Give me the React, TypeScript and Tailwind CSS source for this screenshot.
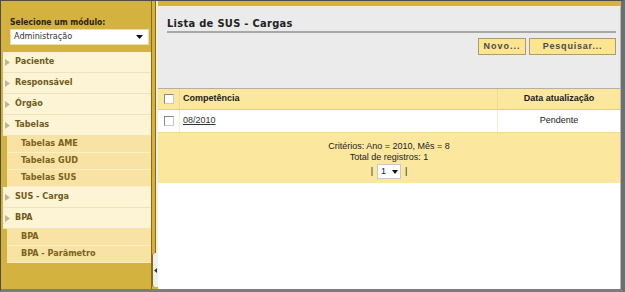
import React from "react";

const menuFont = { fontFamily: '"DejaVu Sans Condensed", "Liberation Sans", Arial, sans-serif' };
const tableFont = { fontFamily: '"Liberation Sans", Arial, sans-serif' };

type Item = { label: string; children?: string[] };

const menu: Item[] = [
  { label: "Paciente" },
  { label: "Responsável" },
  { label: "Órgão" },
  { label: "Tabelas", children: ["Tabelas AME", "Tabelas GUD", "Tabelas SUS"] },
  { label: "SUS - Carga" },
  { label: "BPA", children: ["BPA", "BPA - Parâmetro"] },
];

function Arrow() {
  return (
    <svg width="5" height="7" viewBox="0 0 5 7" className="shrink-0">
      <path d="M0 0 L5 3.5 L0 7Z" fill="#b8ba93" />
    </svg>
  );
}

function Checkbox() {
  return (
    <div className="h-[10px] w-[10px] border border-[#8a8a8a] border-b-[#c8c8c8] border-r-[#c8c8c8] bg-white" />
  );
}

function Sidebar() {
  return (
    <div className="flex w-[150px] shrink-0 flex-col" style={menuFont}>
      <div className="pl-[9px] pr-[2px] pt-[16px]">
        <div className="h-[11px] text-[8.5px] font-bold leading-[11px] text-[#2a2208]">
          Selecione um módulo:
        </div>
        <div className="mt-[1px] flex h-[16px] items-center justify-between border border-[#e8dcb0] bg-white pl-[3px] pr-[5px] text-[9px] text-[#333]">
          <span>Administração</span>
          <svg width="7" height="4" viewBox="0 0 7 4">
            <path d="M0 0 L7 0 L3.5 4Z" fill="#111" />
          </svg>
        </div>
      </div>
      <div className="ml-[2px] mt-[7px] flex flex-col">
        {menu.map((item) => (
          <div key={item.label} className="flex flex-col">
            <div className="flex h-[21px] items-center gap-[5px] border-b border-[#efe3bc] bg-[#fdf4d6] pl-[2px] text-[9px] font-bold text-[#6d5c1a]">
              <Arrow />
              <span>{item.label}</span>
            </div>
            {item.children && (
              <div className="flex flex-col pl-[4px]">
                {item.children.map((c) => (
                  <div
                    key={c}
                    className="flex h-[17px] items-center border-b border-[#fbefc6] bg-[#f8e3a5] pl-[14px] text-[9px] font-bold text-[#7a621a]"
                  >
                    {c}
                  </div>
                ))}
              </div>
            )}
          </div>
        ))}
      </div>
    </div>
  );
}

function Divider() {
  return (
    <div className="flex w-[7px] shrink-0">
      <div className="w-[1px] bg-[#8c6b12]" />
      <div className="flex w-[6px] flex-col">
        <div className="flex flex-1">
          <div className="w-[3px]" />
          <div className="w-[1px] bg-[#8c6b12]" />
          <div className="w-[2px] bg-[#f3efe0]" />
        </div>
        <div className="mb-[2px] flex h-[34px] items-center rounded-l-[3px] border-l border-[#8c6b12] bg-[#edf0f0] pl-[1px]">
          <svg width="3" height="5" viewBox="0 0 3 5">
            <path d="M3 0 L0 2.5 L3 5Z" fill="#2a3a55" />
          </svg>
        </div>
      </div>
    </div>
  );
}

function Main() {
  return (
    <div className="flex flex-1 flex-col pt-[5px]">
      <div className="flex flex-1 flex-col border-r border-t border-[#b8b8b8] border-t-[#f5f0dc] bg-white">
        <div className="flex h-[82px] flex-col border-b border-[#b5b0a0] bg-[#ebebeb]">
          <div
            className="ml-[9px] mr-[4px] mt-[9px] h-[17px] border-b-2 border-[#a8a8a8] text-[11px] font-bold leading-[15px] tracking-[0.3px] text-[#222]"
            style={menuFont}
          >
            Lista de SUS - Cargas
          </div>
          <div className="mr-[4px] mt-[5px] flex justify-end gap-[3px]" style={tableFont}>
            <div className="flex h-[17px] w-[48px] items-center justify-center border border-[#a89c70] bg-[#fde58f] text-[9px] font-bold tracking-[1px] text-[#4a4a4a]">
              Novo...
            </div>
            <div className="flex h-[17px] w-[87px] items-center justify-center border border-[#a89c70] bg-[#fde58f] text-[9px] font-bold tracking-[0.8px] text-[#4a4a4a]">
              Pesquisar...
            </div>
          </div>
        </div>

        <div className="flex flex-col text-[9px] text-[#1a1a1a]" style={tableFont}>
          <div className="flex h-[21px] border-b border-[#e2cf85] bg-[#fce79f] font-bold">
            <div className="flex w-[22px] items-center justify-center border-r border-[#eedb98]">
              <Checkbox />
            </div>
            <div className="flex flex-1 items-center pl-[3px]">Competência</div>
            <div className="flex w-[123px] items-center justify-center border-l border-[#eedb98]">
              Data atualização
            </div>
          </div>
          <div className="flex h-[22px] bg-white">
            <div className="flex w-[22px] items-center justify-center border-r border-[#f5ecc8]">
              <Checkbox />
            </div>
            <div className="flex flex-1 items-center pl-[3px]">
              <span className="text-[#333] underline">08/2010</span>
            </div>
            <div className="flex w-[123px] items-center justify-center border-l border-[#f5ecc8] text-[#222]">
              Pendente
            </div>
          </div>
          <div className="flex flex-col items-center border-t border-[#f0dc90] bg-[#fce79f] pb-[4px] pt-[8px] leading-[11px] text-[#222]">
            <div>Critérios: Ano = 2010, Mês = 8</div>
            <div>Total de registros: 1</div>
            <div className="mt-[1px] flex items-center gap-[4px]">
              <span>|</span>
              <div className="flex h-[15px] w-[24px] items-center justify-between border border-[#c8c8c8] bg-white pl-[3px] pr-[2px]">
                <span>1</span>
                <svg width="6" height="4" viewBox="0 0 6 4">
                  <path d="M0 0 L6 0 L3 4Z" fill="#111" />
                </svg>
              </div>
              <span>|</span>
            </div>
          </div>
        </div>
      </div>
    </div>
  );
}

export default function App() {
  return (
    <div className="flex h-[292px] w-[625px] overflow-hidden border-b-[3px] border-l border-r-[4px] border-t border-[#4d4d4d] border-b-[#7c7c7c] border-r-[#6e6e6e] bg-[#d4b23f]">
      <Sidebar />
      <Divider />
      <Main />
    </div>
  );
}
